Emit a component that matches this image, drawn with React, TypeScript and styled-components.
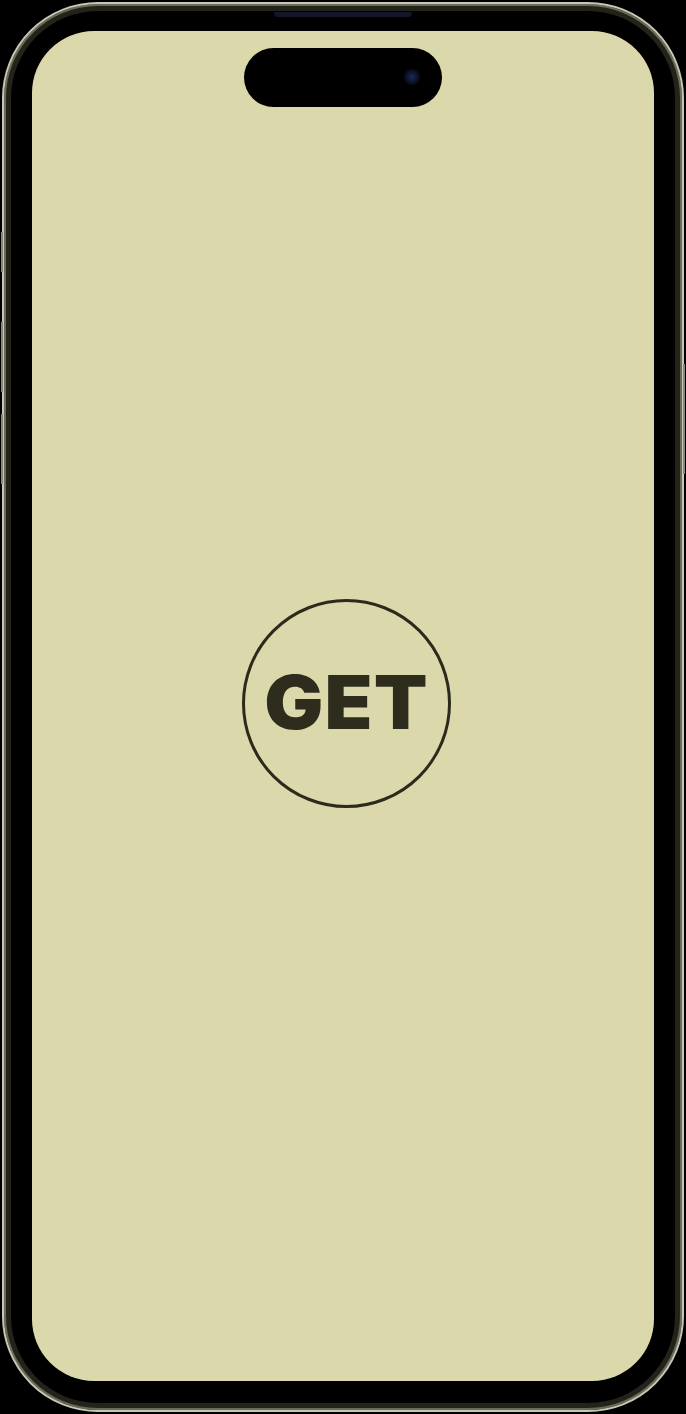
import styled, { createGlobalStyle } from "styled-components"

const Global = createGlobalStyle`
  html, body {
    margin: 0;
    padding: 0;
    background: #000;
  }
  #root {
    width: 686px;
    height: 1414px;
  }
`

const Phone = styled.div`
  position: relative;
  box-sizing: border-box;
  width: 682px;
  height: 1410px;
  margin: 2px;
  padding: 27px 28px 29px 28px;
  border: 2px solid #c8c6b4;
  border-radius: 96px;
  background: #000;
  box-shadow: inset 0 0 0 2px #6b6a58, inset 0 0 0 7px #23231a;
  display: flex;
`

// top speaker slot and side keys sit on the frame edge
const Speaker = styled.div`
  position: absolute;
  top: 8px;
  left: 270px;
  width: 138px;
  height: 5px;
  border-radius: 0 0 4px 4px;
  background: #14142a;
`

const SideButton = styled.div<{ $side: "left" | "right"; $top: number; $h: number }>`
  position: absolute;
  ${(p) => (p.$side === "left" ? "left: -3px;" : "right: -3px;")}
  top: ${(p) => p.$top}px;
  width: 2px;
  height: ${(p) => p.$h}px;
  background: #8a8974;
`

const Screen = styled.main`
  position: relative;
  flex: 1;
  border-radius: 62px;
  background: #dbd9ac;
  display: flex;
  align-items: center;
  justify-content: center;
  padding: 0 0 6px 6px;
  overflow: hidden;
`

const Island = styled.div`
  position: absolute;
  top: 17px;
  left: 50%;
  transform: translateX(-50%);
  width: 198px;
  height: 59px;
  border-radius: 30px;
  background: #000;
`

const Camera = styled.div`
  position: absolute;
  top: 21px;
  right: 22px;
  width: 16px;
  height: 16px;
  border-radius: 50%;
  background: radial-gradient(circle, #1b2a5a 0%, #0a0f24 55%, #000 100%);
`

const Badge = styled.div`
  box-sizing: border-box;
  width: 209px;
  height: 209px;
  border-radius: 50%;
  border: 3px solid #2b2a1c;
  display: flex;
  align-items: center;
  justify-content: center;
`

const Label = styled.span`
  font-family: Inter, "Liberation Sans", sans-serif;
  font-weight: 900;
  font-size: 74px;
  line-height: 1;
  letter-spacing: 1px;
  color: #2e2d1d;
  margin: 0 0 2px 0;
  transform: scaleX(1.06);
`

export default function App() {
  return (
    <>
      <Global />
      <Phone>
        <Speaker />
        <SideButton $side="left" $top={228} $h={40} />
        <SideButton $side="left" $top={318} $h={70} />
        <SideButton $side="left" $top={410} $h={70} />
        <SideButton $side="right" $top={360} $h={110} />
        <Screen>
          <Island>
            <Camera />
          </Island>
          <Badge>
            <Label>GET</Label>
          </Badge>
        </Screen>
      </Phone>
    </>
  )
}
